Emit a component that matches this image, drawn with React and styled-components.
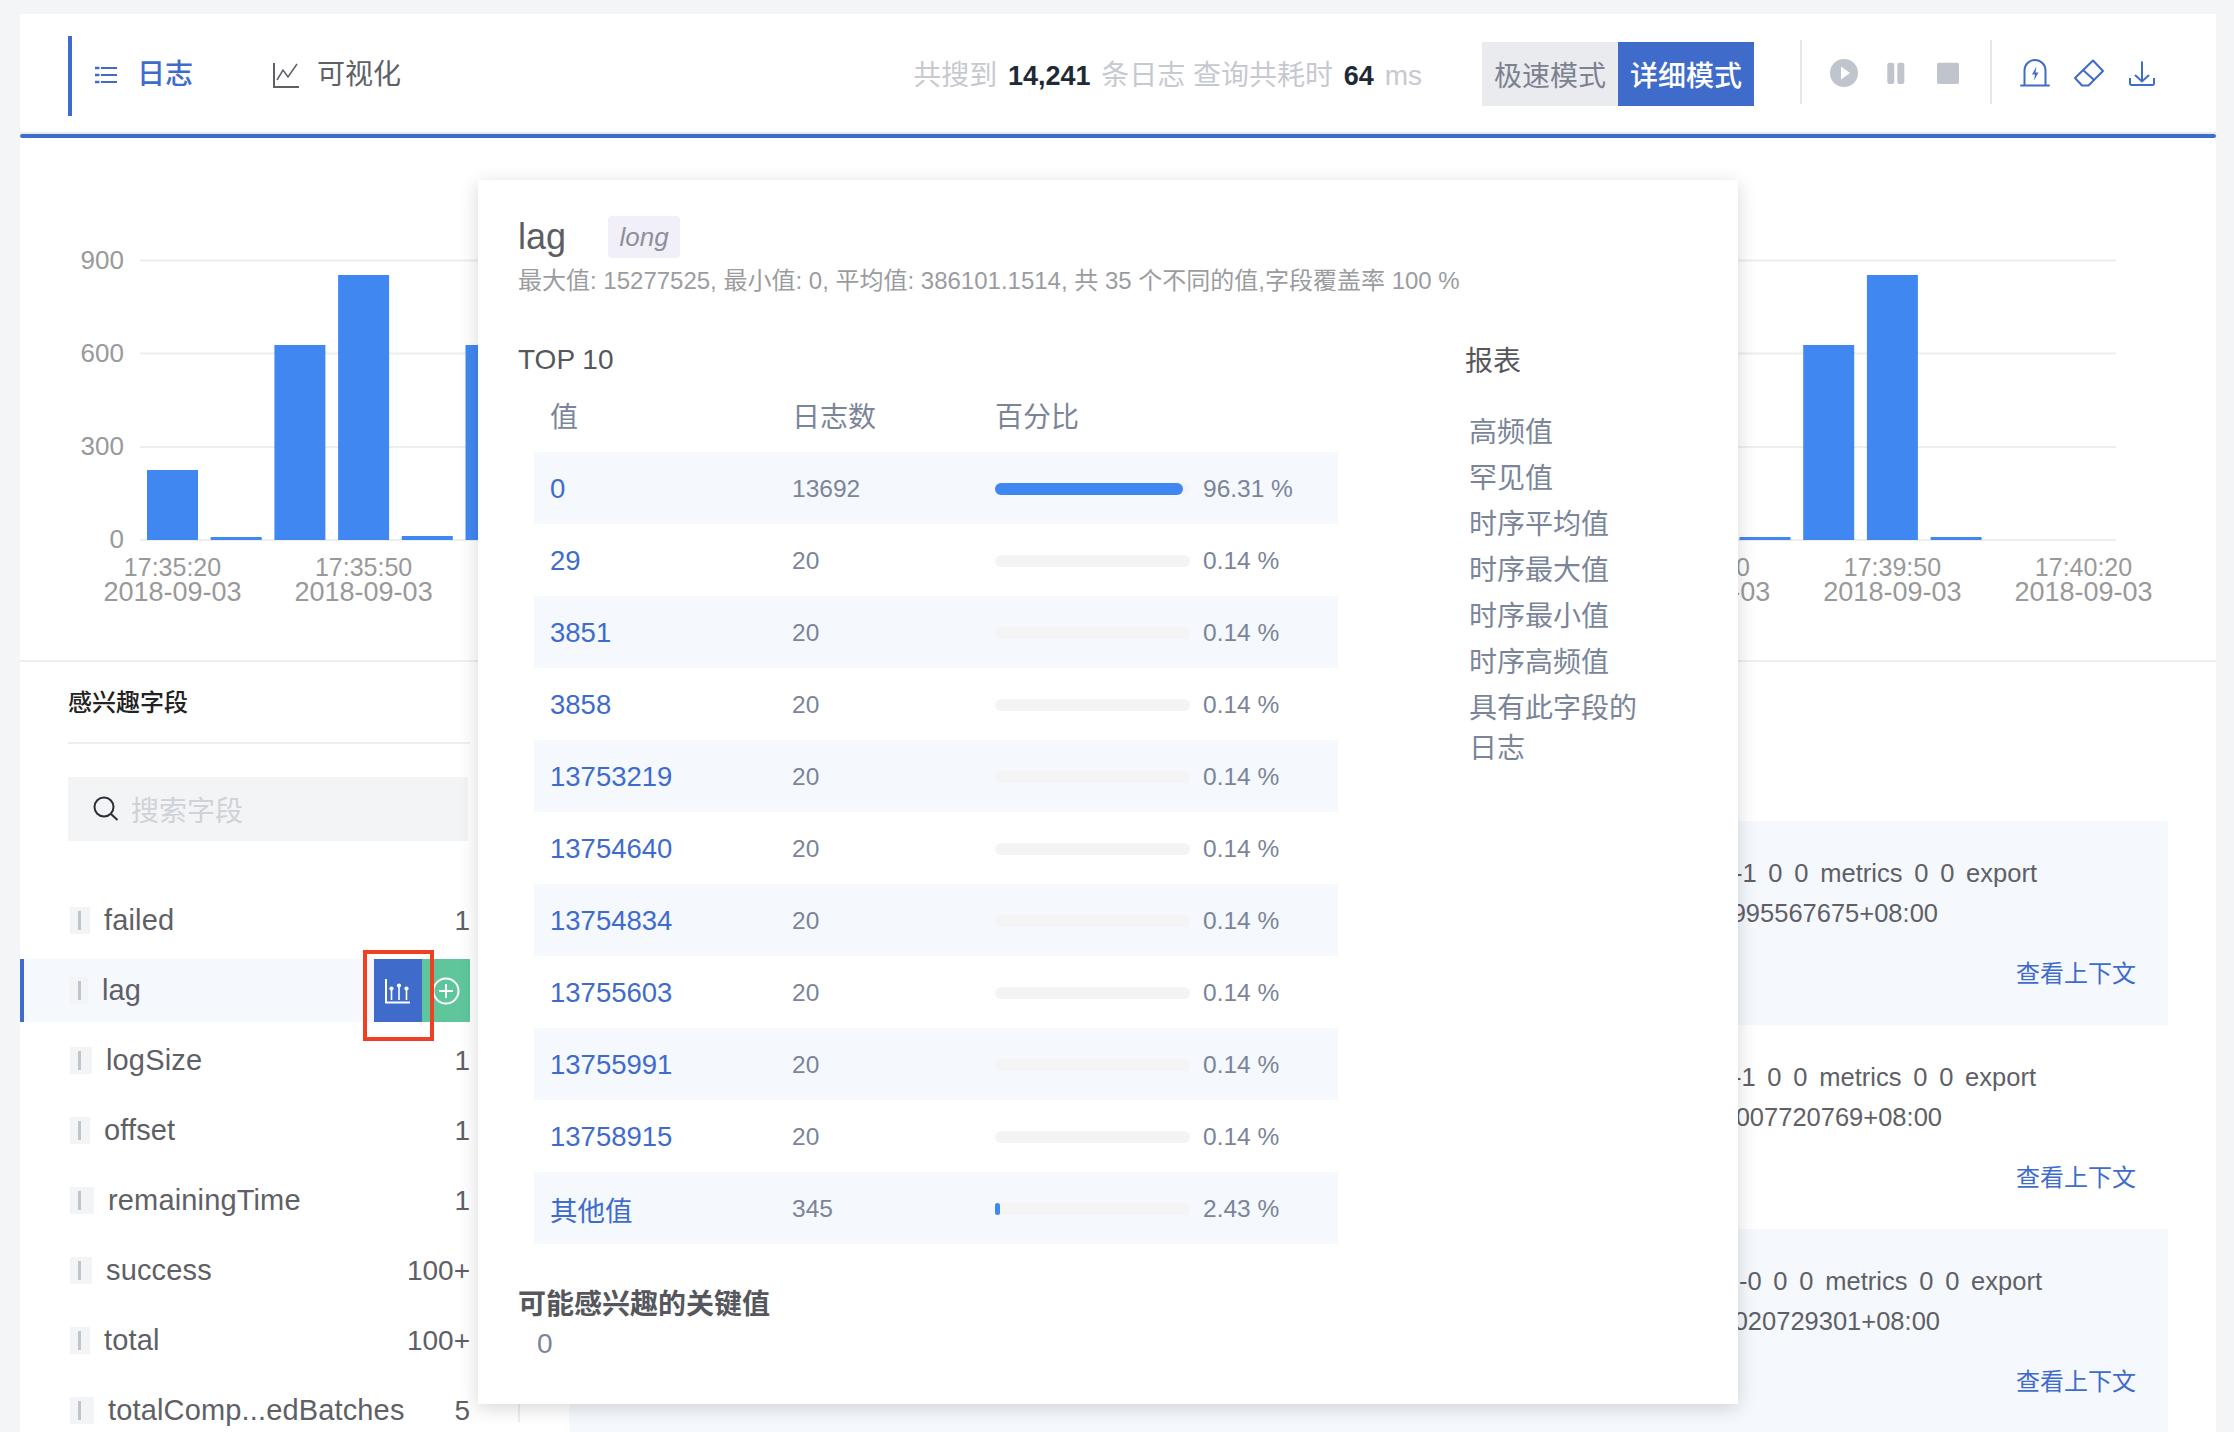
import React from "react";
import styled, { createGlobalStyle } from "styled-components";

const BLUE = "#3f6ccb";
const BAR = "#4187f2";
const MUTED = "#7b8599";
const INK = "#55575c";

const FIELDS = [
  { name: "failed", count: "1", chip: 20 },
  { name: "lag", count: "", chip: 18, active: true },
  { name: "logSize", count: "1", chip: 22 },
  { name: "offset", count: "1", chip: 20 },
  { name: "remainingTime", count: "1", chip: 24 },
  { name: "success", count: "100+", chip: 22 },
  { name: "total", count: "100+", chip: 20 },
  { name: "totalComp...edBatches", count: "5", chip: 24 },
];

const TOP_VALUES = [
  ["0", "13692", 96.31, "96.31 %"],
  ["29", "20", 0, "0.14 %"],
  ["3851", "20", 0, "0.14 %"],
  ["3858", "20", 0, "0.14 %"],
  ["13753219", "20", 0, "0.14 %"],
  ["13754640", "20", 0, "0.14 %"],
  ["13754834", "20", 0, "0.14 %"],
  ["13755603", "20", 0, "0.14 %"],
  ["13755991", "20", 0, "0.14 %"],
  ["13758915", "20", 0, "0.14 %"],
  ["其他值", "345", 2.43, "2.43 %"],
];

const REPORTS = ["高频值", "罕见值", "时序平均值", "时序最大值", "时序最小值", "时序高频值", "具有此字段的日志"];

const LOGS = [
  { line: "logstash-1  0  0  metrics  0  0  export", lineEnd: 131, time: "2018-09-03T17:40:13.995567675+08:00", timeEnd: 230 },
  { line: "logstash-1  0  0  metrics  0  0  export", lineEnd: 132, time: "2018-09-03T17:40:14.007720769+08:00", timeEnd: 226 },
  { line: "logstash-0  0  0  metrics  0  0  export", lineEnd: 126, time: "2018-09-03T17:40:14.020729301+08:00", timeEnd: 228 },
];

const BARS = [
  [0, 70], [1, 3], [2, 195], [3, 265], [4, 4], [5, 195],
  [25, 3], [26, 195], [27, 265], [28, 3],
];
const TICKS = [
  [0, "17:35:20"], [3, "17:35:50"], [24, "17:39:20"], [27, "17:39:50"], [30, "17:40:20"],
];

const Global = createGlobalStyle`
  html, body {
    margin: 0;
    height: 100%;
    overflow: hidden;
    background: #f4f5f7;
    font-family: "Liberation Sans", "Noto Sans CJK SC", sans-serif;
  }
`;

const Page = styled.div`
  height: 1432px;
  padding: 14px 18px 0 20px;
  box-sizing: border-box;
  overflow: hidden;
`;

const Card = styled.div`
  position: relative;
  height: 1418px;
  background: #fff;
  overflow: hidden;
`;

const Header = styled.header`
  display: flex;
  align-items: flex-start;
  height: 118px;
  padding: 0 55px 0 48px;
  border-bottom: 2px solid #e8eaef;
`;

const BlueRule = styled.div`
  height: 4px;
  border-radius: 2px;
  background: ${BLUE};
`;

const Tabs = styled.nav`
  display: flex;
  align-items: center;
  gap: 80px;
  height: 80px;
  margin-top: 22px;
  padding: 0 0 3px 23px;
  box-sizing: border-box;
  border-left: 4px solid ${BLUE};
`;

const Tab = styled.div`
  display: flex;
  align-items: center;
  gap: 18px;
  font-size: 28px;
  line-height: 40px;
  font-weight: ${(p) => (p.$active ? 500 : 400)};
  color: ${(p) => (p.$active ? BLUE : "#5e6066")};
`;

const Stats = styled.div`
  margin: 42px 0 0 auto;
  font-size: 28px;
  line-height: 40px;
  color: #c6c9d0;
  white-space: pre;
`;

const Strong = styled.b`
  margin: 0 3px;
  font-size: 27px;
  color: #1f2a37;
  font-weight: 600;
`;

const Modes = styled.div`
  display: flex;
  margin: 28px 0 0 60px;
`;

const Mode = styled.div`
  width: 136px;
  height: 64px;
  display: flex;
  align-items: center;
  justify-content: center;
  font-size: 28px;
  font-weight: ${(p) => (p.$active ? 500 : 400)};
  color: ${(p) => (p.$active ? "#fff" : "#7d8290")};
  background: ${(p) => (p.$active ? BLUE : "#e9ebef")};
`;

const Sep = styled.div`
  width: 2px;
  height: 64px;
  margin: 26px 0 0 ${(p) => p.$left}px;
  background: #e6e7ea;
`;

const Tools = styled.div`
  display: flex;
  align-items: center;
  gap: ${(p) => p.$gap}px;
  height: 64px;
  margin: 26px 0 0 ${(p) => p.$left}px;
`;

const ChartBox = styled.section`
  height: 522px;
  border-bottom: 2px solid #eee;
`;

const ChartSvg = styled.svg`
  display: block;
  width: 2196px;
  height: 521px;
`;

const Lower = styled.div`
  display: flex;
  height: 760px;
`;

const Sidebar = styled.aside`
  width: 450px;
  flex: none;
  padding-left: 48px;
  border-right: 2px solid #eee;
`;

const SideTitle = styled.h3`
  width: 402px;
  height: 76px;
  margin: 0;
  padding-bottom: 4px;
  display: flex;
  align-items: center;
  font-size: 24px;
  font-weight: 500;
  color: #222;
  border-bottom: 2px solid #eee;
`;

const SearchBox = styled.div`
  display: flex;
  align-items: center;
  gap: 12px;
  width: 400px;
  height: 64px;
  margin-top: 33px;
  padding-left: 25px;
  box-sizing: border-box;
  background: #f3f4f6;
  font-size: 28px;
  color: #cfd2d6;
`;

const FieldList = styled.div`
  display: flex;
  flex-direction: column;
  gap: 7px;
  width: 450px;
  margin: 48px 0 0 -48px;
`;

const FieldRow = styled.div`
  display: flex;
  align-items: center;
  gap: 14px;
  height: 63px;
  padding: 0 0 0 48px;
  box-sizing: border-box;
  background: ${(p) => (p.$active ? "#f5f8fd" : "transparent")};
  box-shadow: ${(p) => (p.$active ? `inset 4px 0 0 ${BLUE}` : "none")};
  position: relative;
  font-size: 29px;
  letter-spacing: 0.15px;
  color: #5e6066;
  white-space: nowrap;
`;

const Chip = styled.span`
  width: ${(p) => p.$w}px;
  height: 27px;
  margin-left: 2px;
  flex: none;
  display: flex;
  align-items: center;
  padding-left: 8px;
  box-sizing: border-box;
  background: #f3f4f6;
  &::before {
    content: "";
    width: 3px;
    height: 19px;
    background: #c0c4cc;
  }
`;

const Count = styled.span`
  margin-left: auto;
  font-size: 28px;
  letter-spacing: 0;
`;

const FieldActions = styled.div`
  display: flex;
  height: 63px;
  margin-left: auto;
`;

const FieldAction = styled.div`
  width: 48px;
  display: flex;
  align-items: center;
  justify-content: center;
  background: ${(p) => p.$bg};
`;

const Highlight = styled.div`
  position: absolute;
  left: 343px;
  top: -9px;
  width: 71px;
  height: 91px;
  box-sizing: border-box;
  border: 4px solid #ee4023;
`;

const LogList = styled.div`
  flex: 1;
  padding: 159px 48px 0 49px;
`;

const LogRow = styled.article`
  height: 204px;
  padding-top: 32px;
  box-sizing: border-box;
  background: ${(p) => (p.$striped ? "#f5f8fd" : "#fff")};
`;

const LogLine = styled.div`
  padding-right: ${(p) => p.$end}px;
  text-align: right;
  font-size: 25.5px;
  word-spacing: -1.2px;
  line-height: 40px;
  white-space: pre;
  color: #5e6066;
`;

const ContextLink = styled.a`
  display: block;
  margin-top: 21px;
  padding-right: 32px;
  text-align: right;
  font-size: 24px;
  line-height: 40px;
  color: ${BLUE};
`;

const Popup = styled.div`
  position: absolute;
  left: 458px;
  top: 166px;
  width: 1260px;
  height: 1224px;
  padding: 36px 0 0 40px;
  box-sizing: border-box;
  background: #fff;
  box-shadow: 0 4px 18px rgba(0, 0, 0, 0.16);
`;

const PopupHead = styled.div`
  display: flex;
  align-items: center;
  gap: 42px;
  height: 42px;
`;

const PopupName = styled.span`
  font-size: 36px;
  color: #5c5e63;
`;

const TypeChip = styled.span`
  width: 72px;
  height: 42px;
  display: flex;
  align-items: center;
  justify-content: center;
  border-radius: 4px;
  background: #f1f0f9;
  font-size: 26px;
  font-style: italic;
  color: #8f8f9c;
`;

const Summary = styled.p`
  margin: 5px 0 0;
  font-size: 24px;
  line-height: 36px;
  color: #9b9ca0;
`;

const Columns = styled.div`
  display: flex;
  margin-top: 41px;
`;

const TopCol = styled.div`
  width: 947px;
`;

const ColTitle = styled.h4`
  margin: 0;
  font-size: 28px;
  line-height: 40px;
  font-weight: ${(p) => p.$weight || 400};
  color: ${INK};
`;

const ReportCol = styled.div`
  padding-top: 2px;
`;

const Table = styled.div`
  width: 804px;
  margin: 15px 0 0 16px;
`;

const TableRow = styled.div`
  display: grid;
  grid-template-columns: 242px 203px 1fr;
  align-items: center;
  height: ${(p) => (p.$head ? 40 : 72)}px;
  margin-bottom: ${(p) => (p.$head ? 17 : 0)}px;
  padding: ${(p) => (p.$head ? 0 : 2)}px 0 0 16px;
  box-sizing: border-box;
  background: ${(p) => (p.$striped ? "#f5f8fd" : "transparent")};
  font-size: ${(p) => (p.$head ? 28 : 24.5)}px;
  color: ${MUTED};
`;

const Value = styled.span`
  font-size: 27.5px;
  color: ${BLUE};
`;

const PercentCell = styled.div`
  display: flex;
  align-items: center;
  gap: 13px;
`;

const Track = styled.div`
  width: 195px;
  height: 12px;
  border-radius: 6px;
  background: #f4f4f4;
`;

const Fill = styled.div`
  height: 100%;
  border-radius: 6px;
  background: ${BAR};
`;

const ReportList = styled.ul`
  width: 172px;
  margin: 31px 0 0 4px;
  padding: 0;
  list-style: none;
`;

const ReportItem = styled.li`
  margin-bottom: 6px;
  font-size: 28px;
  line-height: 40px;
  color: ${MUTED};
`;

const KeyTitle = styled(ColTitle)`
  margin-top: 41px;
`;

const KeyValue = styled.div`
  padding-left: 19px;
  margin-top: -1px;
  font-size: 28px;
  line-height: 40px;
  color: ${MUTED};
`;

function ListIcon() {
  return (
    <svg width="24" height="20" viewBox="0 0 24 20" fill="none" stroke={BLUE} strokeWidth="2">
      <path d="M6 3h16M6 10h16M6 17h16" />
      <path d="M0.5 3h3M0.5 10h3M0.5 17h3" strokeLinecap="round" strokeWidth="2.4" />
    </svg>
  );
}

function LineIcon() {
  return (
    <svg width="26" height="26" viewBox="0 0 26 26" fill="none" stroke="#5e6066" strokeWidth="2">
      <path d="M1 1v24h25" />
      <path d="M4 18l6-10 5 7 9-13" strokeWidth="1.5" />
    </svg>
  );
}

function PlayIcon() {
  return (
    <svg width="36" height="36" viewBox="0 0 36 36">
      <circle cx="18" cy="19" r="14" fill="#c0c4cc" />
      <path d="M15 12.5L24 19l-9 6.5z" fill="#fff" />
    </svg>
  );
}

function PauseIcon() {
  return (
    <svg width="36" height="36" viewBox="0 0 36 36" fill="#c0c4cc">
      <rect x="9.3" y="8.7" width="7" height="21.3" rx="2" />
      <rect x="19.3" y="8.7" width="7" height="21.3" rx="2" />
    </svg>
  );
}

function StopIcon() {
  return (
    <svg width="36" height="36" viewBox="0 0 36 36" fill="#c0c4cc">
      <rect x="7" y="8.7" width="22" height="21.3" rx="2" />
    </svg>
  );
}

function AlarmIcon() {
  return (
    <svg width="36" height="36" viewBox="0 0 36 36" fill="none" stroke={BLUE} strokeWidth="2">
      <path d="M7.5 31V16.5a10.5 10.5 0 0 1 21 0V31" />
      <path d="M4 31.5h28" strokeLinecap="round" />
      <path d="M19.5 12.5l-4.5 8h3l-1 6 4.5-8h-3z" fill={BLUE} stroke="none" />
    </svg>
  );
}

function EraserIcon() {
  return (
    <svg width="36" height="36" viewBox="0 0 36 36" fill="none" stroke={BLUE} strokeWidth="2" strokeLinejoin="round">
      <path d="M22 6.5L32 17 17.5 31.5h-6.5L4 24z" />
      <path d="M11.5 15.5L23 26" />
    </svg>
  );
}

function DownloadIcon() {
  return (
    <svg width="36" height="36" viewBox="0 0 36 36" fill="none" stroke={BLUE} strokeWidth="2">
      <path d="M17 7.5V27.5M10 21l7 6.5 7-6.5" />
      <path d="M5 24v5.5A1.5 1.5 0 0 0 6.5 31h21a1.5 1.5 0 0 0 1.5-1.5V24" />
    </svg>
  );
}

function SearchIcon() {
  return (
    <svg width="26" height="26" viewBox="0 0 26 26" fill="none" stroke="#2a2f38" strokeWidth="2">
      <circle cx="11" cy="11" r="9.5" />
      <path d="M18 18l6.5 6" />
    </svg>
  );
}

function StatsIcon() {
  return (
    <svg width="26" height="26" viewBox="0 0 26 26" fill="none" stroke="#fff" strokeWidth="2">
      <path d="M1 1v23.5h24" />
      <path d="M6.5 12v10M14 9v13M21.5 12v10" strokeWidth="1.6" />
      <circle cx="6.5" cy="10.5" r="2.1" fill="#fff" stroke="none" />
      <circle cx="14" cy="7.5" r="2.1" fill="#fff" stroke="none" />
      <circle cx="21.5" cy="10.5" r="2.1" fill="#fff" stroke="none" />
    </svg>
  );
}

function PlusIcon() {
  return (
    <svg width="28" height="28" viewBox="0 0 28 28" fill="none" stroke="#fff" strokeWidth="2">
      <circle cx="14" cy="14" r="12.5" />
      <path d="M14 7v14M7 14h14" />
    </svg>
  );
}

function Histogram() {
  const gridLines = [[260.5, "900"], [353.5, "600"], [447, "300"], [540, "0"]];
  return (
    <ChartSvg viewBox="20 138 2196 521" fontFamily="Liberation Sans, sans-serif">
      {gridLines.map(([y, label]) => (
        <g key={label}>
          <line x1="140" x2="2116" y1={y} y2={y} stroke="#eee" strokeWidth="2" />
          <text x="124" y={y + 8} textAnchor="end" fontSize="26" fill="#999">{label}</text>
        </g>
      ))}
      {BARS.map(([i, h]) => (
        <rect key={i} x={147 + i * 63.7} y={540 - h} width="51" height={h} fill={BAR} />
      ))}
      {TICKS.map(([i, time]) => (
        <g key={time} textAnchor="middle" fill="#999">
          <text x={172.5 + i * 63.7} y="576" fontSize="25">{time}</text>
          <text x={172.5 + i * 63.7} y="601" fontSize="27">2018-09-03</text>
        </g>
      ))}
    </ChartSvg>
  );
}

function FieldPanel() {
  return (
    <Sidebar>
      <SideTitle>感兴趣字段</SideTitle>
      <SearchBox>
        <SearchIcon />
        搜索字段
      </SearchBox>
      <FieldList>
        {FIELDS.map((f) => (
          <FieldRow key={f.name} $active={f.active}>
            <Chip $w={f.chip} />
            {f.name}
            {f.active ? (
              <>
                <FieldActions>
                  <FieldAction $bg={BLUE}><StatsIcon /></FieldAction>
                  <FieldAction $bg="#5fc69b"><PlusIcon /></FieldAction>
                </FieldActions>
                <Highlight />
              </>
            ) : (
              <Count>{f.count}</Count>
            )}
          </FieldRow>
        ))}
      </FieldList>
    </Sidebar>
  );
}

function FieldPopup() {
  return (
    <Popup>
      <PopupHead>
        <PopupName>lag</PopupName>
        <TypeChip>long</TypeChip>
      </PopupHead>
      <Summary>最大值: 15277525, 最小值: 0, 平均值: 386101.1514, 共 35 个不同的值,字段覆盖率 100 %</Summary>
      <Columns>
        <TopCol>
          <ColTitle $weight={500}>TOP 10</ColTitle>
          <Table>
            <TableRow $head>
              <span>值</span>
              <span>日志数</span>
              <span>百分比</span>
            </TableRow>
            {TOP_VALUES.map(([value, count, fill, percent], i) => (
              <TableRow key={value} $striped={i % 2 === 0}>
                <Value>{value}</Value>
                <span>{count}</span>
                <PercentCell>
                  <Track>
                    {fill > 0 && <Fill style={{ width: `${fill}%` }} />}
                  </Track>
                  {percent}
                </PercentCell>
              </TableRow>
            ))}
          </Table>
          <KeyTitle $weight={600}>可能感兴趣的关键值</KeyTitle>
          <KeyValue>0</KeyValue>
        </TopCol>
        <ReportCol>
          <ColTitle>报表</ColTitle>
          <ReportList>
            {REPORTS.map((r) => (
              <ReportItem key={r}>{r}</ReportItem>
            ))}
          </ReportList>
        </ReportCol>
      </Columns>
    </Popup>
  );
}

export default function App() {
  return (
    <Page>
      <Global />
      <Card>
        <Header>
          <Tabs>
            <Tab $active><ListIcon />日志</Tab>
            <Tab><LineIcon />可视化</Tab>
          </Tabs>
          <Stats>
            共搜到 <Strong>14,241</Strong> 条日志 查询共耗时 <Strong>64</Strong> ms
          </Stats>
          <Modes>
            <Mode>极速模式</Mode>
            <Mode $active>详细模式</Mode>
          </Modes>
          <Sep $left={46} />
          <Tools $left={24} $gap={16}>
            <PlayIcon />
            <PauseIcon />
            <StopIcon />
          </Tools>
          <Sep $left={24} />
          <Tools $left={25} $gap={18}>
            <AlarmIcon />
            <EraserIcon />
            <DownloadIcon />
          </Tools>
        </Header>
        <BlueRule />
        <ChartBox>
          <Histogram />
        </ChartBox>
        <Lower>
          <FieldPanel />
          <LogList>
            {LOGS.map((log, i) => (
              <LogRow key={log.time} $striped={i % 2 === 0}>
                <LogLine $end={log.lineEnd}>{log.line}</LogLine>
                <LogLine $end={log.timeEnd}>{log.time}</LogLine>
                <ContextLink>查看上下文</ContextLink>
              </LogRow>
            ))}
          </LogList>
        </Lower>
        <FieldPopup />
      </Card>
    </Page>
  );
}
